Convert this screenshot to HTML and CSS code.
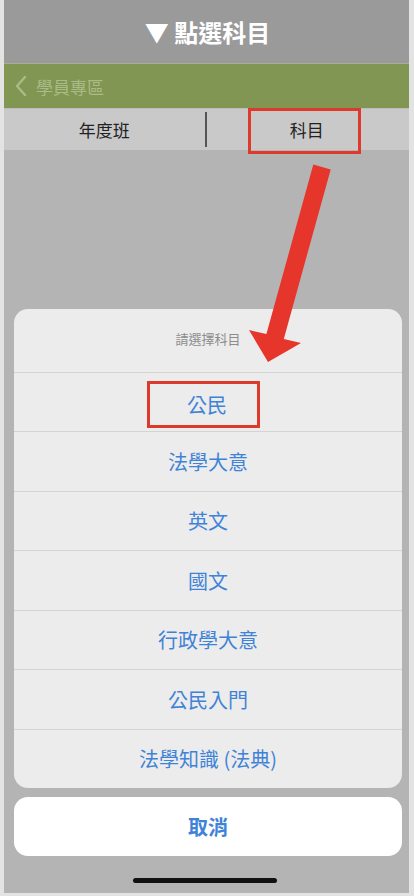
FILE: index.html
```html
<!DOCTYPE html>
<html lang="zh-Hant">

<head>
  <meta charset="UTF-8">
  <meta name="viewport" content="width=device-width, initial-scale=1.0">
  <title>點選科目</title>
  <link rel="stylesheet" href="styles.css">
</head>

<body>
  <div class="frame">
    <div class="caption">▼ 點選科目</div>
    <div class="navbar">
      <svg class="back" width="12" height="20" viewBox="0 0 12 20">
        <path d="M10 1 L2 10 L10 19" fill="none" stroke="#a9bb86" stroke-width="2.4" stroke-linecap="round" stroke-linejoin="round" />
      </svg>
      <span>學員專區</span>
    </div>
    <div class="tabs">
      <div class="tab">年度班</div>
      <div class="divider"></div>
      <div class="tab active">科目<span class="mark-box"></span></div>
    </div>

    <div class="filler"></div>

    <div class="sheet">
      <div class="sheet-title">請選擇科目</div>
      <div class="option"><span class="mark">公民</span></div>
      <div class="option">法學大意</div>
      <div class="option">英文</div>
      <div class="option">國文</div>
      <div class="option">行政學大意</div>
      <div class="option">公民入門</div>
      <div class="option">法學知識 (法典)</div>
    </div>
    <div class="cancel">取消</div>
    <div class="home-area">
      <div class="home-bar"></div>
    </div>

    <svg class="arrow" width="414" height="896" viewBox="0 0 414 896">
      <polygon points="313.3,164.6 330.7,169.4 283.8,338.9 301,343 268,362 249,330 266.4,334.1" fill="#e6352a" />
    </svg>
  </div>
</body>

</html>
```

FILE: styles.css
```css
body {
  margin: 0;
  font-family: "Noto Sans CJK TC", "Noto Sans", sans-serif;
  background-color: #e3e3e3;
}

.frame {
  position: relative;
  width: 405px;
  height: 893px;
  margin-left: 4px;
  display: flex;
  flex-direction: column;
  background-color: #b4b4b4;
  overflow: hidden;
}

.caption {
  height: 64px;
  background-color: #9a9a9a;
  color: #fff;
  font-size: 24px;
  font-weight: bold;
  display: flex;
  align-items: center;
  justify-content: center;
  padding-left: 2px;
  border-bottom: 1px solid #a7ad9a;
  box-sizing: border-box;
}

.navbar {
  height: 44px;
  background-color: #819652;
  color: #a9bb86;
  font-size: 17px;
  display: flex;
  align-items: center;
  padding-left: 11px;
  gap: 9px;
}

.tabs {
  height: 42px;
  background-color: #c9c9c9;
  display: flex;
  align-items: stretch;
  border-top: 1px solid #bcbcbc;
  box-sizing: border-box;
}

.tab {
  position: relative;
  flex: 1;
  display: flex;
  align-items: center;
  justify-content: center;
  font-size: 17px;
  color: #222;
}

.tab.active {
  padding-right: 2px;
}

.mark-box {
  position: absolute;
  left: 41px;
  top: -1px;
  width: 113px;
  height: 46px;
  border: 3px solid #dc3a2c;
  box-sizing: border-box;
}

.divider {
  align-self: center;
  width: 2px;
  height: 35px;
  background-color: #555;
}

.filler {
  flex: 1;
}

.sheet {
  margin: 0 7px 0 10px;
  background-color: #ececec;
  border-radius: 14px;
  overflow: hidden;
}

.sheet-title {
  height: 63px;
  display: flex;
  align-items: center;
  justify-content: center;
  font-size: 13px;
  color: #8c8c8c;
  padding-bottom: 3px;
  box-sizing: border-box;
}

.option {
  height: 59.5px;
  box-sizing: border-box;
  border-top: 1px solid #d4d4d4;
  display: flex;
  align-items: center;
  justify-content: center;
  font-size: 20px;
  color: #3f83d8;
}

.mark {
  display: inline-flex;
  align-items: center;
  justify-content: center;
  width: 113px;
  height: 47px;
  margin: 6px 10px 0 0;
  border: 3px solid #dc3a2c;
  padding-left: 8px;
  box-sizing: border-box;
}

.cancel {
  margin: 9px 7px 0 10px;
  height: 59px;
  background-color: #fff;
  border-radius: 14px;
  display: flex;
  align-items: center;
  justify-content: center;
  font-size: 20px;
  font-weight: bold;
  color: #3f83d8;
}

.home-area {
  height: 37px;
  display: flex;
  justify-content: center;
  padding-top: 22px;
  box-sizing: border-box;
}

.home-bar {
  width: 144px;
  height: 5px;
  border-radius: 3px;
  background-color: #111;
  margin-right: 3px;
}

.arrow {
  position: absolute;
  left: -4px;
  top: 0;
  pointer-events: none;
}
```
